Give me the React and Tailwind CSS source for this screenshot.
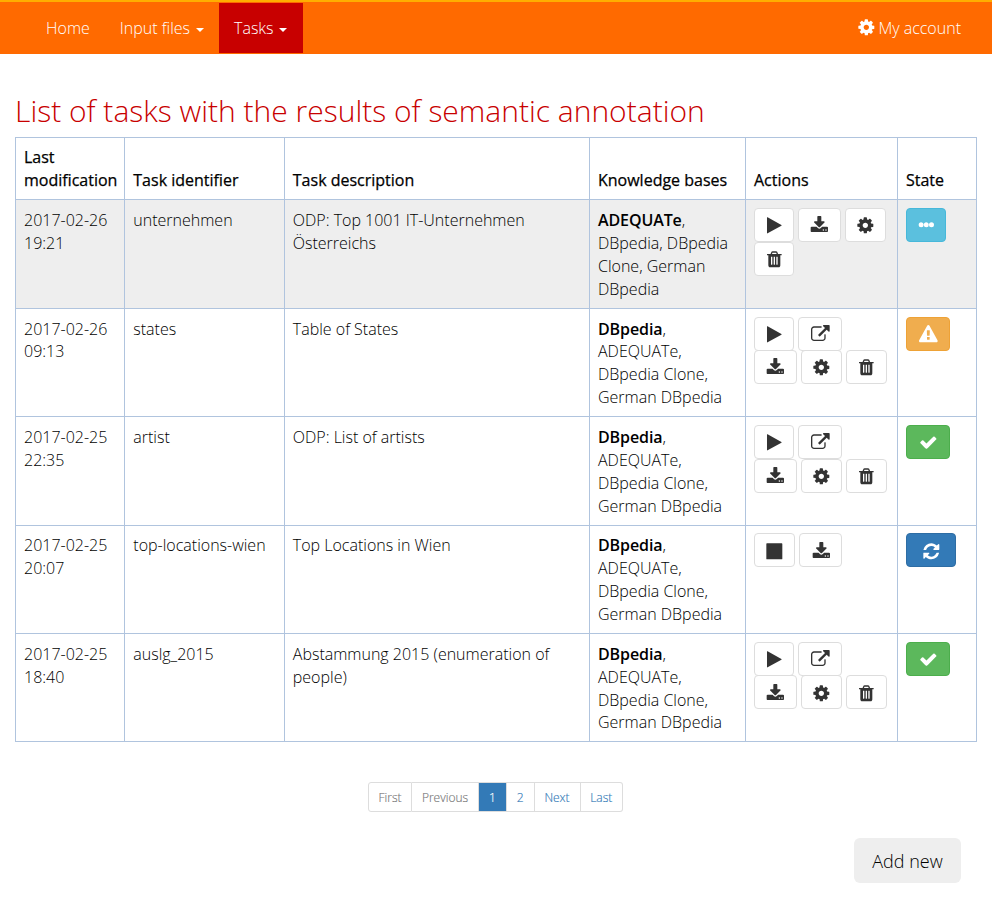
import React from 'react';

const icons = {
  play: 'M1576 927l-1328 738q-23 13-39.5 3t-16.5-36v-1472q0-26 16.5-36t39.5 3l1328 738q23 13 23 31t-23 31z',
  stop: 'M1664 192v1408q0 26-19 45t-45 19h-1408q-26 0-45-19t-19-45v-1408q0-26 19-45t45-19h1408q26 0 45 19t19 45z',
  download:
    'M1344 1344q0-26-19-45t-45-19-45 19-19 45 19 45 45 19 45-19 19-45zm256 0q0-26-19-45t-45-19-45 19-19 45 19 45 45 19 45-19 19-45zm128-224v320q0 40-28 68t-68 28h-1472q-40 0-68-28t-28-68v-320q0-40 28-68t68-28h465l135 136q58 56 136 56t136-56l136-136h464q40 0 68 28t28 68zm-325-569q17 41-14 70l-448 448q-18 19-45 19t-45-19l-448-448q-31-29-14-70 17-39 59-39h256v-448q0-26 19-45t45-19h256q26 0 45 19t19 45v448h256q42 0 59 39z',
  cog: 'M1152 896q0-106-75-181t-181-75-181 75-75 181 75 181 181 75 181-75 75-181zm512-109v222q0 12-8 23t-20 13l-185 28q-19 54-39 91 35 50 107 138 10 12 10 25t-9 23q-27 37-99 108t-94 71q-12 0-26-9l-138-108q-44 23-91 38-16 136-29 186-7 28-36 28h-222q-14 0-24.5-8.5t-11.5-21.5l-28-184q-49-16-90-37l-141 107q-10 9-25 9-14 0-25-11-126-114-165-168-7-10-7-23 0-12 8-23 15-21 51-66.5t54-70.5q-27-50-41-99l-183-27q-13-2-21-12.5t-8-23.5v-222q0-12 8-23t19-13l186-28q14-46 39-92-40-57-107-138-10-12-10-24 0-10 9-23 26-36 98.5-107.5t94.5-71.5q13 0 26 10l138 107q44-23 91-38 16-136 29-186 7-28 36-28h222q14 0 24.5 8.5t11.5 21.5l28 184q49 16 90 37l142-107q9-9 24-9 13 0 25 10 129 119 165 170 7 8 7 22 0 12-8 23-15 21-51 66.5t-54 70.5q26 50 41 98l183 28q13 2 21 12.5t8 23.5z',
  trash:
    'M704 1376v-704q0-14-9-23t-23-9h-64q-14 0-23 9t-9 23v704q0 14 9 23t23 9h64q14 0 23-9t9-23zm256 0v-704q0-14-9-23t-23-9h-64q-14 0-23 9t-9 23v704q0 14 9 23t23 9h64q14 0 23-9t9-23zm256 0v-704q0-14-9-23t-23-9h-64q-14 0-23 9t-9 23v704q0 14 9 23t23 9h64q14 0 23-9t9-23zm-544-992h448l-48-117q-7-9-17-11h-317q-10 2-17 11zm928 32v64q0 14-9 23t-23 9h-96v948q0 83-47 143.5t-113 60.5h-832q-66 0-113-58.5t-47-141.5v-952h-96q-14 0-23-9t-9-23v-64q0-14 9-23t23-9h309l70-167q15-37 54-63t79-26h320q40 0 79 26t54 63l70 167h309q14 0 23 9t9 23z',
  external:
    'M1408 928v320q0 119-84.5 203.5t-203.5 84.5h-832q-119 0-203.5-84.5t-84.5-203.5v-832q0-119 84.5-203.5t203.5-84.5h704q14 0 23 9t9 23v64q0 14-9 23t-23 9h-704q-66 0-113 47t-47 113v832q0 66 47 113t113 47h832q66 0 113-47t47-113v-320q0-14 9-23t23-9h64q14 0 23 9t9 23zm384-864v512q0 26-19 45t-45 19-45-19l-176-176-652 652q-10 10-23 10t-23-10l-114-114q-10-10-10-23t10-23l652-652-176-176q-19-19-19-45t19-45 45-19h512q26 0 45 19t19 45z',
  dots: 'M640 832a240 240 0 1 0-480 0a240 240 0 1 0 480 0zm496 0a240 240 0 1 0-480 0a240 240 0 1 0 480 0zm496 0a240 240 0 1 0-480 0a240 240 0 1 0 480 0z',
  warning:
    'M1024 1375v-190q0-14-9.5-23.5t-22.5-9.5h-192q-13 0-22.5 9.5t-9.5 23.5v190q0 14 9.5 23.5t22.5 9.5h192q13 0 22.5-9.5t9.5-23.5zm-2-374l18-459q0-12-10-19-13-11-24-11h-220q-11 0-24 11-10 7-10 21l17 457q0 10 10 16.5t24 6.5h185q14 0 23.5-6.5t10.5-16.5zm-14-934l768 1408q35 63-2 126-17 29-46.5 46t-63.5 17h-1536q-34 0-63.5-17t-46.5-46q-37-63-2-126l768-1408q17-31 47-49t65-18 65 18 47 49z',
  check:
    'M1671 566q0 40-28 68l-724 724-136 136q-28 28-68 28t-68-28l-136-136-362-362q-28-28-28-68t28-68l136-136q28-28 68-28t68 28l294 295 656-657q28-28 68-28t68 28l136 136q28 28 28 68z',
  refresh:
    'M1639 1056q0 5-1 7-64 268-268 434.5t-478 166.5q-146 0-282.5-55t-243.5-157l-129 129q-19 19-45 19t-45-19-19-45v-448q0-26 19-45t45-19h448q26 0 45 19t19 45-19 45l-137 137q71 66 161 102t187 36q134 0 250-65t186-179q11-17 53-117 8-23 30-23h192q13 0 22.5 9.5t9.5 22.5zm25-800v448q0 26-19 45t-45 19h-448q-26 0-45-19t-19-45 19-45l138-138q-148-137-349-137-134 0-250 65t-186 179q-11 17-53 117-8 23-30 23h-199q-13 0-22.5-9.5t-9.5-22.5v-7q65-268 270-434.5t480-166.5q146 0 284 55.5t245 156.5l130-129q19-19 45-19t45 19 19 45z',
};

function Icon({ name, className = '' }) {
  return (
    <svg viewBox="0 0 1792 1792" fill="currentColor" className={`size-[18.67px] shrink-0 overflow-visible ${className}`}>
      <path d={icons[name]} />
    </svg>
  );
}

const actionWidths = {
  play: 'w-[40.3px]',
  stop: 'w-[41.7px]',
  download: 'w-[43px]',
  cog: 'w-[41.5px]',
  trash: 'w-[40.5px]',
  external: 'w-[44px]',
};

function ActionButton({ name }) {
  return (
    <button className={`flex h-[34px] items-center justify-center rounded border border-[#ddd] bg-white pt-px text-[#333] ${actionWidths[name]}`}>
      <Icon name={name} />
    </button>
  );
}

const states = {
  waiting: { icon: 'dots', style: 'w-[40px] bg-[#5bc0de] border-[#46b8da]' },
  warning: { icon: 'warning', style: 'w-[44px] bg-[#f0ad4e] border-[#eea236]' },
  done: { icon: 'check', style: 'w-[44px] bg-[#5cb85c] border-[#4cae4c]' },
  running: { icon: 'refresh', style: 'w-[50px] bg-[#337ab7] border-[#2e6da4]' },
};

const otherBases = ['ADEQUATe,', 'DBpedia Clone,', 'German DBpedia'];
const fullActions = [['play', 'external'], ['download', 'cog', 'trash']];

const tasks = [
  {
    date: '2017-02-26', time: '19:21', id: 'unternehmen', description: 'ODP: Top 1001 IT-Unternehmen Österreichs',
    base: 'ADEQUATe', others: ['DBpedia, DBpedia', 'Clone, German', 'DBpedia'],
    actions: [['play', 'download', 'cog'], ['trash']], state: 'waiting', active: true,
  },
  { date: '2017-02-26', time: '09:13', id: 'states', description: 'Table of States', base: 'DBpedia', others: otherBases, actions: fullActions, state: 'warning' },
  { date: '2017-02-25', time: '22:35', id: 'artist', description: 'ODP: List of artists', base: 'DBpedia', others: otherBases, actions: fullActions, state: 'done' },
  { date: '2017-02-25', time: '20:07', id: 'top-locations-wien', description: 'Top Locations in Wien', base: 'DBpedia', others: otherBases, actions: [['stop', 'download']], state: 'running' },
  { date: '2017-02-25', time: '18:40', id: 'auslg_2015', description: 'Abstammung 2015 (enumeration of people)', base: 'DBpedia', others: otherBases, actions: fullActions, state: 'done' },
];

const textCell = 'border border-[#b0c4de] px-2 pt-[8.8px] pb-[7.2px] align-top';
const buttonCell = 'border border-[#b0c4de] px-2 pt-[7.9px] pb-2 align-top';

function TaskRow({ task }) {
  const state = states[task.state];
  return (
    <tr className={`h-[108.4px] ${task.active ? 'bg-[#eee]' : ''}`}>
      <td className={textCell}>{task.date}<br />{task.time}</td>
      <td className={textCell}>{task.id}</td>
      <td className={textCell}>{task.description}</td>
      <td className={`${textCell} whitespace-nowrap`}>
        <strong className="font-semibold tracking-[-0.1px]">{task.base}</strong>,
        {task.others.map((line) => <div key={line}>{line}</div>)}
      </td>
      <td className={buttonCell}>
        <div className="-ml-[0.3px] flex flex-col -space-y-[0.5px]">
          {task.actions.map((group, i) => (
            <div key={i} className="flex gap-[4px]">
              {group.map((name) => <ActionButton key={name} name={name} />)}
            </div>
          ))}
        </div>
      </td>
      <td className={buttonCell}>
        <button className={`flex h-[34px] items-center justify-center rounded border pt-px text-white ${state.style}`}>
          <Icon name={state.icon} />
        </button>
      </td>
    </tr>
  );
}

function Caret() {
  return <span className="ml-[5.5px] mr-[0.5px] mt-[4px] inline-block border-x-4 border-t-4 border-x-transparent border-t-current" />;
}

const pages = [
  { label: 'First', style: 'w-[44px] text-[#777] rounded-l-[3px] border-l' },
  { label: 'Previous', style: 'w-[67px] text-[#777]' },
  { label: '1', style: 'w-[28px] bg-[#337ab7] border-[#337ab7] text-white' },
  { label: '2', style: 'w-[27.5px] text-[#337ab7]' },
  { label: 'Next', style: 'w-[46px] text-[#337ab7]' },
  { label: 'Last', style: 'w-[42.5px] text-[#337ab7] rounded-r-[3px]' },
];

export default function App() {
  return (
    <div className="h-[897px] overflow-hidden bg-white font-['Open_Sans',sans-serif] text-[16px] leading-[22.857px] font-light text-black">
      <nav className="flex h-[54px] items-start justify-between border-t-2 border-[#ffae00] bg-[#ff6a00] pt-px pr-[31px] pl-[31px] text-white">
        <div className="flex h-[50px]">
          <a className="flex items-center px-[15px]">Home</a>
          <a className="flex items-center px-[15px]">Input files<Caret /></a>
          <a className="flex items-center bg-[#c80000] px-[15px]">Tasks<Caret /></a>
        </div>
        <a className="flex h-[50px] items-center gap-[3px]"><Icon name="cog" className="mb-[2px]" />My account</a>
      </nav>

      <main className="px-[15px]">
        <h1 className="mt-[40px] mb-[10px] text-[30px] leading-[33px] text-[#c80000] whitespace-nowrap">
          List of tasks with the results of semantic annotation
        </h1>
        <table className="w-[962px] table-fixed border-collapse">
          <colgroup>
            <col className="w-[109.3px]" />
            <col className="w-[159.5px]" />
            <col className="w-[305.2px]" />
            <col className="w-[156px]" />
            <col className="w-[152px]" />
            <col className="w-[79px]" />
          </colgroup>
          <thead>
            <tr className="h-[62px]">
              {['Last modification', 'Task identifier', 'Task description', 'Knowledge bases', 'Actions', 'State'].map((title) => (
                <th key={title} className="border border-[#b0c4de] px-2 pt-2 pb-[7.6px] text-left align-bottom font-normal [-webkit-text-stroke:0.25px_black]">{title}</th>
              ))}
            </tr>
          </thead>
          <tbody>
            {tasks.map((task) => <TaskRow key={task.id} task={task} />)}
          </tbody>
        </table>

        <div className="mt-[40px] -ml-px flex justify-center text-[12px] leading-[18px]">
          {pages.map((page) => (
            <a key={page.label} className={`flex h-[30px] items-center justify-center border-y border-r border-[#ddd] pt-px [-webkit-text-stroke:0.15px_currentColor] ${page.style}`}>
              {page.label}
            </a>
          ))}
        </div>

        <div className="mt-[26px] flex justify-end pr-4">
          <button className="h-[45px] w-[107px] rounded-md bg-[#eee] pt-px text-[18px]">Add new</button>
        </div>
      </main>
    </div>
  );
}
